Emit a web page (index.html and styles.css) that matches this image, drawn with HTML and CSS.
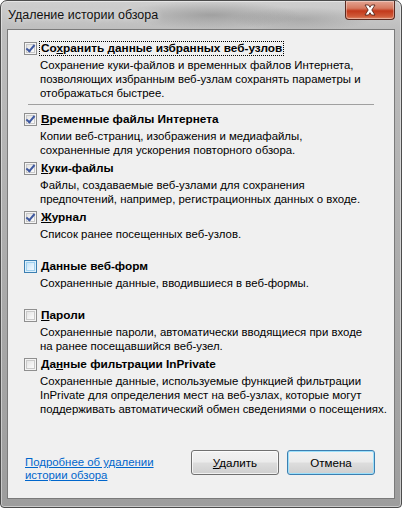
FILE: index.html
```html
<!DOCTYPE html>
<html lang="ru">
<head>
  <meta charset="UTF-8" />
  <title>Удаление истории обзора</title>
  <link rel="stylesheet" href="styles.css">
</head>
<body>
  <div class="window">
    <div class="titlebar">
      <span class="title">Удаление истории обзора</span>
      <div class="close">
        <svg width="20" height="12" viewBox="0 0 20 12">
          <path d="M5 1h3.5l1.5 2.3 1.5-2.3H15l-3.2 5 3.2 5h-3.5L10 8.7 8.5 11H5l3.2-5z" fill="#fff" stroke="#4a1a10" stroke-width="0.8" stroke-linejoin="round"/>
        </svg>
      </div>
    </div>

    <div class="client">
      <div class="item">
        <span class="box checked"></span>
        <span class="label focus">Со<u>х</u>ранить данные избранных веб-узлов</span>
        <p class="desc">Сохранение куки-файлов и временных файлов Интернета,<br>позволяющих избранным веб-узлам сохранять параметры и<br>отображаться быстрее.</p>
      </div>

      <div class="sep"></div>

      <div class="item gap-top">
        <span class="box checked"></span>
        <span class="label"><u>В</u>ременные файлы Интернета</span>
        <p class="desc">Копии веб-страниц, изображения и медиафайлы,<br>сохраненные для ускорения повторного обзора.</p>
      </div>

      <div class="item">
        <span class="box checked"></span>
        <span class="label"><u>К</u>уки-файлы</span>
        <p class="desc">Файлы, создаваемые веб-узлами для сохранения<br>предпочтений, например, регистрационных данных о входе.</p>
      </div>

      <div class="item">
        <span class="box checked"></span>
        <span class="label"><u>Ж</u>урнал</span>
        <p class="desc">Список ранее посещенных веб-узлов.</p>
      </div>

      <div class="item">
        <span class="box hover"></span>
        <span class="label"><u>Д</u>анные веб-форм</span>
        <p class="desc">Сохраненные данные, вводившиеся в веб-формы.</p>
      </div>

      <div class="item">
        <span class="box"></span>
        <span class="label"><u>П</u>ароли</span>
        <p class="desc">Сохраненные пароли, автоматически вводящиеся при входе<br>на ранее посещавшийся веб-узел.</p>
      </div>

      <div class="item">
        <span class="box"></span>
        <span class="label">Да<u>н</u>ные фильтрации InPrivate</span>
        <p class="desc">Сохраненные данные, используемые функцией фильтрации<br>InPrivate для определения мест на веб-узлах, которые могут<br>поддерживать автоматический обмен сведениями о посещениях.</p>
      </div>

      <div class="footer">
        <a class="help" href="#">Подробнее об удалении<br>истории обзора</a>
        <div class="buttons">
          <button class="btn"><u>У</u>далить</button>
          <button class="btn default">Отмена</button>
        </div>
      </div>
    </div>
  </div>
</body>
</html>
```

FILE: styles.css
```css
html, body {
  margin: 0;
  padding: 0;
}
body {
  width: 402px;
  height: 508px;
  overflow: hidden;
  font-family: 'Liberation Sans', Arial, sans-serif;
  font-size: 11.4px;
  color: #000;
  background: #fff;
}
.window {
  box-sizing: border-box;
  width: 402px;
  height: 508px;
  border: 1px solid #4c4c4c;
  border-radius: 7px 7px 4px 4px;
  padding: 0 6px 8px 6px;
  display: flex;
  flex-direction: column;
  background:
    radial-gradient(ellipse 90px 14px at 210px 14px, rgba(90,90,90,0.35), transparent),
    radial-gradient(ellipse 70px 12px at 300px 18px, rgba(110,110,110,0.3), transparent),
    linear-gradient(to bottom, #cfcfcf 0, #bdbdbd 30px, #a9a9a9 60%, #9d9d9d 100%);
  box-shadow: inset 0 0 0 1px rgba(255,255,255,0.45);
}
.titlebar {
  height: 28px;
  display: flex;
  justify-content: space-between;
  align-items: flex-start;
}
.title {
  margin: 7px 0 0 1px;
  font-size: 12.5px;
  color: #111;
  text-shadow: 0 0 6px rgba(255,255,255,0.7);
}
.close {
  width: 50px;
  height: 19px;
  box-sizing: border-box;
  border: 1px solid #5a2a20;
  border-top: none;
  border-radius: 0 0 4px 4px;
  background: linear-gradient(to bottom, #e3a492 0, #d57a60 40%, #c3391b 55%, #cf5a38 85%, #e08a6a 100%);
  box-shadow: inset 0 0 0 1px rgba(255,255,255,0.35);
  display: flex;
  align-items: center;
  justify-content: center;
}
.client {
  flex: 1;
  border: 1px solid #7a7a7a;
  background: #f0f0f0;
  padding: 11px 16px 0 16px;
  display: flex;
  flex-direction: column;
}
.item {
  display: grid;
  grid-template-columns: 13px 1fr;
  column-gap: 3px;
  align-items: center;
  margin-bottom: 4px;
}
.item.gap-top {
  margin-top: 6.5px;
}
.label {
  font-size: 11.8px;
  font-weight: bold;
  line-height: 13px;
  justify-self: start;
  padding: 0 1px;
  margin-left: -1px;
  border: 1px dotted transparent;
}
.label.focus {
  border-color: #000;
}
.desc {
  grid-column: 2;
  margin: 2px 0 0 0;
  min-height: 28px;
  line-height: 14px;
  white-space: nowrap;
  color: #000;
}
.box {
  box-sizing: border-box;
  width: 13px;
  height: 13px;
  border: 1px solid #8f8f8f;
  background: linear-gradient(135deg, #dcdcdc 0, #f4f4f4 60%, #ffffff 100%);
  box-shadow: inset 0 0 0 1px #f4f4f4, inset 0 0 0 2px #c9c9c9;
  position: relative;
}
.box.checked::after {
  content: "";
  position: absolute;
  left: 3px;
  top: 0px;
  width: 3px;
  height: 7px;
  border: solid #3f59a0;
  border-width: 0 2px 2px 0;
  transform: rotate(40deg);
}
.box.hover {
  border-color: #3c7fb1;
  background: linear-gradient(135deg, #b9dcf4 0, #e6f3fc 60%, #f5fbff 100%);
  box-shadow: inset 0 0 0 1px #def0fb, inset 0 0 0 2px #9fd0ef;
}
.sep {
  height: 1px;
  background: #a0a0a0;
  margin: 0 4px 0 4px;
}
.footer {
  margin-top: auto;
  margin-bottom: 16px;
  display: flex;
  justify-content: space-between;
  align-items: flex-start;
}
.help {
  color: #0066cc;
  line-height: 13px;
  margin: 6px 0 0 1px;
}
.buttons {
  display: flex;
  gap: 8px;
  margin-right: 3px;
}
.btn {
  box-sizing: border-box;
  width: 88px;
  height: 25px;
  font-family: inherit;
  font-size: 11.6px;
  color: #000;
  border: 1px solid #707070;
  border-radius: 3px;
  background: linear-gradient(to bottom, #f2f2f2 0, #ebebeb 48%, #dddddd 52%, #cfcfcf 100%);
  box-shadow: inset 0 0 0 1px rgba(255,255,255,0.7);
  padding: 0;
}
.btn.default {
  border-color: #3c7fb1;
  box-shadow: inset 0 0 0 1px #9ce0fb;
}
```
